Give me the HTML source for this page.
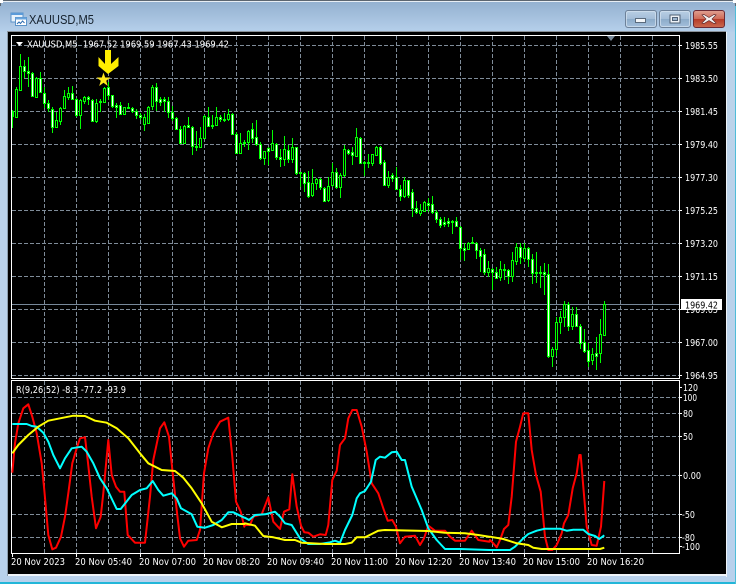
<!DOCTYPE html>
<html>
<head>
<meta charset="utf-8">
<style>
html,body{margin:0;padding:0;background:#b8d0ea}
body{width:736px;height:584px;overflow:hidden;position:relative;font-family:"Liberation Sans",sans-serif}
svg{position:absolute;left:0;top:0}
text{font-family:"DejaVu Sans","Liberation Sans",sans-serif}
text.t{font-family:"Liberation Sans",sans-serif}
</style>
</head>
<body>
<svg id="s" width="736" height="584" viewBox="0 0 736 584" xmlns="http://www.w3.org/2000/svg">
<defs>
<linearGradient id="tb" x1="0" y1="0" x2="0" y2="1"><stop offset="0" stop-color="#94b1d0"/><stop offset="1" stop-color="#b6d0eb"/></linearGradient>
<linearGradient id="lf" x1="0" y1="0" x2="0" y2="1"><stop offset="0" stop-color="#b6d0eb"/><stop offset="0.1" stop-color="#bcd3ea"/><stop offset="1" stop-color="#b8d1ec"/></linearGradient>
<linearGradient id="b1" x1="0" y1="0" x2="0" y2="1"><stop offset="0" stop-color="#b9cfe4"/><stop offset="0.5" stop-color="#a3bdd8"/><stop offset="0.5" stop-color="#8cabc9"/><stop offset="1" stop-color="#a5c0dc"/></linearGradient>
<linearGradient id="b2" x1="0" y1="0" x2="0" y2="1"><stop offset="0" stop-color="#e0a092"/><stop offset="0.5" stop-color="#cf6a56"/><stop offset="0.5" stop-color="#b53a28"/><stop offset="1" stop-color="#cb6a50"/></linearGradient>
</defs>
<!-- window -->
<rect x="0" y="0" width="736" height="584" fill="url(#lf)"/>
<path d="M0 584V5Q0 1 5 1H730Q735 1 735 6V584Z" fill="url(#lf)"/>
<rect x="0" y="2" width="736" height="30" fill="url(#tb)"/>
<path d="M0 6V4Q0 0 4 0H731Q736 0 736 5V7H735V5Q735 1 731 1H4Q1 1 1 4V6Z" fill="#5c6670"/>
<rect x="3" y="1" width="730" height="1" fill="#e8eef4"/>
<rect x="0" y="0" width="3" height="3" fill="#fff"/><rect x="733" y="0" width="3" height="3" fill="#fff"/>
<rect x="0" y="582" width="736" height="2" fill="#22b6d8"/>
<rect x="735" y="6" width="1" height="578" fill="#4fbcd8"/>
<rect x="7" y="31" width="719" height="1" fill="#8b9299"/>
<rect x="7" y="32" width="1" height="544" fill="#8b9dae"/>
<!-- icon -->
<rect x="11" y="13" width="12" height="9" fill="#e8f2fb" stroke="#5a92c8"/>
<rect x="11" y="13" width="12" height="2" fill="#5a9ad8"/>
<rect x="15.500" y="17.500" width="11" height="8" fill="#fff" stroke="#5a92c8"/>
<rect x="15.500" y="17.500" width="11" height="2" fill="#6aa6de"/>
<path d="M17 24l2-2 1.500 1.500 2-2.500 2 2" fill="none" stroke="#2a6ab0"/>
<text class="t" x="29" y="24" font-size="12.500" fill="#16222e" textLength="65" lengthAdjust="spacingAndGlyphs">XAUUSD,M5</text>
<!-- buttons -->
<rect x="625.500" y="10.500" width="31" height="17" rx="2.500" fill="url(#b1)" stroke="#6d8199"/>
<rect x="626.500" y="11.500" width="29" height="15" rx="2" fill="none" stroke="#d6e3ef" stroke-opacity=".7"/>
<rect x="635.500" y="18.500" width="10" height="4" fill="#f2f5f8" stroke="#5a6a7c"/>
<rect x="659.500" y="10.500" width="31" height="17" rx="2.500" fill="url(#b1)" stroke="#6d8199"/>
<rect x="660.500" y="11.500" width="29" height="15" rx="2" fill="none" stroke="#d6e3ef" stroke-opacity=".7"/>
<rect x="670" y="15" width="10" height="8" fill="#eef2f6" stroke="#4f6074" stroke-width="1"/>
<rect x="672.500" y="17.500" width="5" height="3" fill="#9db6cf" stroke="#4f6074"/>
<rect x="693.500" y="10.500" width="31" height="17" rx="2.500" fill="url(#b2)" stroke="#6c2a34"/>
<path d="M704 14.500l5 3 5-3 2 .5-4 4 4 4-2 .5-5-3-5 3-2-.5 4-4-4-4z" fill="#f4f2f2" stroke="#5c2c30" stroke-width=".7"/>
<!-- chart bg -->
<rect x="8" y="32" width="718" height="543" fill="#000"/>
<rect x="726" y="32" width="1" height="545" fill="#eef3f8"/>
<rect x="8" y="574" width="719" height="2" fill="#eef3f8"/>
<rect x="11" y="35" width="669" height="1" fill="#fff"/>
<rect x="11" y="35" width="1" height="344" fill="#fff"/>
<rect x="679" y="35" width="1" height="344" fill="#fff"/>
<rect x="11" y="378" width="669" height="1" fill="#fff"/>
<rect x="11" y="380" width="669" height="1" fill="#fff"/>
<rect x="11" y="380" width="1" height="174" fill="#fff"/>
<rect x="679" y="380" width="1" height="174" fill="#fff"/>
<rect x="11" y="553" width="669" height="1" fill="#fff"/>
<g id="grid" stroke="#7f8c99" stroke-width="1" stroke-dasharray="4 2" shape-rendering="crispEdges" fill="none"></g>
<rect x="12" y="304" width="667" height="1" fill="#778899"/>
<g id="cand" shape-rendering="crispEdges"></g>
<polygon points="607,36 615,36 611,41" fill="#778899"/>
<polygon points="16,42 23,42 19.500,46" fill="#fff"/>
<text x="27" y="47.500" font-size="9.500" fill="#fff" textLength="202" lengthAdjust="spacingAndGlyphs" xml:space="preserve">XAUUSD,M5  1967.52 1969.59 1967.43 1969.42</text>
<!-- arrow and star -->
<polygon points="105,50 111,50 111,64 118.500,57 118.500,66 108,74 98.500,66 98.500,57 105,64" fill="#ffee00"/>
<polygon points="103.500,72.500 105.200,77.500 110.500,77.500 106.200,80.700 107.800,86 103.500,82.800 99.200,86 100.800,80.700 96.500,77.500 101.800,77.500" fill="#ffe81a"/>
<g id="ind" fill="none" stroke-width="2" stroke-linejoin="round"></g>
<text x="16" y="393" font-size="9.500" fill="#fff" textLength="110" lengthAdjust="spacingAndGlyphs">R(9,26,52) -8.3 -77.2 -93.9</text>
<!-- price axis -->
<g fill="#fff" font-size="9.500">
<text x="685" y="49" textLength="33" lengthAdjust="spacingAndGlyphs">1985.55</text>
<text x="685" y="82" textLength="33" lengthAdjust="spacingAndGlyphs">1983.50</text>
<text x="685" y="115" textLength="33" lengthAdjust="spacingAndGlyphs">1981.45</text>
<text x="685" y="148" textLength="33" lengthAdjust="spacingAndGlyphs">1979.40</text>
<text x="685" y="181" textLength="33" lengthAdjust="spacingAndGlyphs">1977.30</text>
<text x="685" y="214" textLength="33" lengthAdjust="spacingAndGlyphs">1975.25</text>
<text x="685" y="247" textLength="33" lengthAdjust="spacingAndGlyphs">1973.20</text>
<text x="685" y="280" textLength="33" lengthAdjust="spacingAndGlyphs">1971.15</text>
<text x="685" y="313" textLength="33" lengthAdjust="spacingAndGlyphs">1969.05</text>
<text x="685" y="346" textLength="33" lengthAdjust="spacingAndGlyphs">1967.00</text>
<text x="685" y="379" textLength="33" lengthAdjust="spacingAndGlyphs">1964.95</text>
</g>
<rect x="681" y="299" width="41" height="11" fill="#fff"/>
<text x="685" y="308.500" font-size="9.500" fill="#000" textLength="33" lengthAdjust="spacingAndGlyphs">1969.42</text>
<g fill="#fff" font-size="9.500">
<text x="683" y="391" textLength="15" lengthAdjust="spacingAndGlyphs">120</text>
<text x="683" y="401" textLength="14" lengthAdjust="spacingAndGlyphs">100</text>
<text x="683" y="417" textLength="10" lengthAdjust="spacingAndGlyphs">80</text>
<text x="683" y="440" textLength="10" lengthAdjust="spacingAndGlyphs">50</text>
<text x="683" y="479" textLength="18" lengthAdjust="spacingAndGlyphs">0.00</text>
<text x="682" y="518" textLength="13" lengthAdjust="spacingAndGlyphs">-50</text>
<text x="682" y="541" textLength="13" lengthAdjust="spacingAndGlyphs">-80</text>
<text x="682" y="550" textLength="18" lengthAdjust="spacingAndGlyphs">-100</text>
</g>
<!-- time axis -->
<g fill="#fff" font-size="9.500">
<text x="11" y="565" textLength="54" lengthAdjust="spacingAndGlyphs">20 Nov 2023</text>
<text x="75" y="565" textLength="57" lengthAdjust="spacingAndGlyphs">20 Nov 05:40</text>
<text x="139" y="565" textLength="57" lengthAdjust="spacingAndGlyphs">20 Nov 07:00</text>
<text x="203" y="565" textLength="57" lengthAdjust="spacingAndGlyphs">20 Nov 08:20</text>
<text x="267" y="565" textLength="57" lengthAdjust="spacingAndGlyphs">20 Nov 09:40</text>
<text x="331" y="565" textLength="57" lengthAdjust="spacingAndGlyphs">20 Nov 11:00</text>
<text x="395" y="565" textLength="57" lengthAdjust="spacingAndGlyphs">20 Nov 12:20</text>
<text x="459" y="565" textLength="57" lengthAdjust="spacingAndGlyphs">20 Nov 13:40</text>
<text x="523" y="565" textLength="57" lengthAdjust="spacingAndGlyphs">20 Nov 15:00</text>
<text x="587" y="565" textLength="57" lengthAdjust="spacingAndGlyphs">20 Nov 16:20</text>
</g>
</svg>
<script>
var NS="http://www.w3.org/2000/svg";
function el(p,n,a){var e=document.createElementNS(NS,n);for(var k in a)e.setAttribute(k,a[k]);p.appendChild(e);return e;}
var g=document.getElementById('grid'),i,j;
[45,78,111,144,177,210,243,276,309,342,375,397,413,436,475,514,537].forEach(function(y){el(g,'line',{x1:12,x2:679,y1:y+.5,y2:y+.5});});
for(i=44;i<=652;i+=32){el(g,'line',{x1:i+.5,x2:i+.5,y1:36,y2:378});el(g,'line',{x1:i+.5,x2:i+.5,y1:381,y2:553});}
var t=document.getElementById('s');
[45,78,111,144,177,210,243,276,309,342,375,397,413,436,475,514,537,387,546].forEach(function(y){el(t,'rect',{x:680,y:y,width:2,height:1,fill:'#fff'});});
for(i=12;i<=588;i+=64){el(t,'rect',{x:i,y:554,width:1,height:3,fill:'#fff'});}
var D="330,332,348,385,w 262,268,350,350,b 162,198,270,272,b 180,198,212,235,w 170,212,220,262,w 215,220,287,290,w 230,235,290,295,b 215,235,275,280,w 262,278,310,325,w 300,310,325,335,w 320,328,380,400,w 335,360,380,380,b 320,323,362,375,b 270,287,325,328,b 262,280,290,300,b 258,280,297,300,w 295,298,345,350,w 298,300,345,387,b 288,292,304,312,b 288,292,296,315,w 298,300,362,362,w 298,310,362,368,b 297,302,304,335,w 262,264,305,306,b 245,262,286,300,w 285,286,318,325,w 310,314,320,355,w 305,315,342,345,w 320,322,342,342,b 308,320,323,325,w 320,325,332,340,w 328,332,346,358,w 340,344,352,360,w 342,352,372,392,b 318,320,368,372,b 255,260,318,330,b 248,260,302,332,w 290,298,305,318,w 290,297,303,335,w 290,302,335,355,w 318,335,355,362,w 352,354,388,390,w 378,388,430,432,w 375,378,430,432,b 350,376,380,382,w 378,380,438,466,w 392,438,441,452,b 380,414,440,442,b 345,348,415,418,b 322,350,378,380,w 345,375,378,388,w 322,350,375,378,b 345,350,358,365,w 340,356,359,365,w 328,343,358,362,b 340,343,402,402,w 395,402,458,458,w 400,430,458,460,b 420,426,430,440,w 390,392,425,450,b 370,388,413,430,w 360,412,433,438,w 425,433,473,480,w 473,452,473,495,b 440,445,452,495,w 390,430,450,452,b 430,433,470,480,w 448,470,476,500,w 408,448,476,498,b 435,450,477,490,w 415,442,478,490,b 440,442,520,525,w 515,516,520,560,w 515,518,548,575,w 513,545,588,593,w 507,548,585,590,b 535,538,548,570,b 535,538,562,570,w 560,563,603,607,w 530,557,601,605,b 488,515,556,560,b 505,517,560,568,w 520,526,560,593,b 435,448,526,530,b 448,450,458,465,w 440,456,465,495,w 385,412,468,472,b 412,415,488,490,w 484,486,490,528,w 462,486,490,503,w 462,463,488,498,b 438,442,465,468,b 438,442,490,495,w 480,487,554,556,w 512,530,556,563,b 518,526,533,545,w 502,532,568,570,w 555,568,588,603,w 530,540,587,593,b 540,541,585,593,w 568,576,623,650,w 603,623,635,642,w 613,631,638,647,b 603,607,632,635,b 593,610,614,635,w 588,613,637,643,w 630,637,658,670,w 650,658,675,683,w 650,667,672,680,w 653,664,668,680,w 660,663,665,702,w 650,664,679,680,w 679,680,745,780,w 730,745,749,782,w 725,728,748,750,b 712,727,730,732,w 727,728,751,776,w 745,751,767,815,w 748,763,815,825,w 783,805,815,830,b 805,808,817,870,w 800,817,833,837,w 783,808,830,843,b 793,808,811,841,w 807,811,828,852,w 755,780,828,847,b 730,742,782,795,b 730,742,772,792,w 730,745,773,785,b 740,745,778,802,w 763,778,818,852,w 755,815,818,850,b 797,815,818,863,w 790,817,821,885,w 792,821,1067,1075,w 1040,1048,1067,1100,b 952,967,1048,1067,b 933,952,965,1003,b 902,913,952,980,b 907,911,977,992,w 920,943,977,990,b 920,943,977,980,w 973,977,1030,1048,w 988,1027,1053,1060,w 1030,1051,1082,1100,w 1043,1063,1080,1095,b 1010,1060,1067,1110,w 957,1003,1060,1090,b 903,913,1005,1008,b".split(' ');
var c=document.getElementById('cand');
D.forEach(function(s,n){
 var p=s.split(','),x=12+4*n;
 var a=Math.round(p[0]/3),b=Math.round(p[1]/3),d=Math.round(p[2]/3),e=Math.round(p[3]/3);
 if(d<b+1)d=b+1;
 el(c,'rect',{x:x,y:a,width:1,height:Math.max(e-a,1),fill:'#00ff00'});
 if(n==0){el(c,'rect',{x:12,y:b,width:2,height:d-b+1,fill:'#00ff00'});return;}
 el(c,'rect',{x:x-1,y:b,width:3,height:d-b+1,fill:'#00ff00'});
 if(d-b>=2)el(c,'rect',{x:x,y:b+1,width:1,height:d-b-1,fill:p[4]=='w'?'#ffffff':'#000000'});
});
function pts(z6,z7,z8){var o=[];
 function add(a,ox){for(var k=0;k<a.length;k+=2)o.push((ox+a[k]/3).toFixed(1)+','+(380+a[k+1]/3).toFixed(1));}
 add(z6,0);add(z7,245);add(z8,490);return o.join(' ');}
var ig=document.getElementById('ind');
el(ig,'polyline',{stroke:'#ff0000',points:pts(
[37,278,45,190,55,130,70,85,85,73,97,110,110,160,125,250,133,330,145,465,157,508,168,503,183,470,195,410,205,340,217,250,230,205,240,175,255,172,263,240,275,350,288,445,302,410,310,340,325,180,335,285,348,320,360,335,373,335,383,465,405,488,435,488,450,350,460,240,480,145,493,127,507,170,518,280,530,390,540,475,552,500,565,482,590,480,600,450,612,280,625,205,640,160,660,125,685,113,697,230,708,365,722,395,733,440],
[0,435,15,435,25,410,50,403,70,352,85,425,105,447,117,395,133,388,142,283,155,380,168,437,178,457,190,458,205,470,225,463,242,465,250,435,262,300,275,272,285,195,300,175,310,115,322,90,335,90,350,140,365,215,380,310,400,340,415,385,428,422,442,420,453,440,465,490,480,470,510,467,525,495,537,475,550,437,570,452,600,452,615,470,630,482,660,482,680,452,700,480,733,485],
[0,480,10,490,20,502,30,480,42,447,55,435,65,350,78,185,90,140,100,100,115,100,125,210,138,285,152,335,165,470,175,510,187,510,200,495,215,460,222,430,235,405,248,325,260,280,268,225,272,225,280,320,290,440,305,495,320,497,333,440,343,303])});
el(ig,'polyline',{stroke:'#00ffff',points:pts(
[37,132,80,132,95,138,110,140,130,158,145,185,160,225,180,265,195,235,215,205,245,200,260,215,280,250,300,295,320,325,350,387,362,387,395,345,420,330,440,325,458,303,475,330,490,347,515,340,530,355,543,385,575,403,592,440,615,443,640,435,665,420,685,397,700,397,733,413],
[0,413,12,420,30,405,60,403,90,395,105,410,120,430,140,435,165,475,190,492,225,492,255,487,270,482,285,488,300,450,322,405,335,355,345,340,360,333,378,305,392,240,405,230,420,233,440,217,455,215,470,240,480,240,500,320,530,390,550,445,575,480,600,507,645,507,733,510],
[0,510,60,510,75,500,100,475,115,462,140,452,165,446,210,446,230,452,250,449,280,449,295,462,315,468,328,477,343,466])});
el(ig,'polyline',{stroke:'#ffff00',points:pts(
[37,220,55,195,85,165,115,140,145,122,190,113,220,107,255,108,285,122,320,128,350,145,385,175,420,220,445,250,485,270,525,273,550,293,575,325,605,370,635,425,665,442,695,432,733,432],
[0,430,30,437,55,468,85,472,120,480,150,480,170,488,240,492,300,492,320,488,335,472,360,472,380,462,400,452,420,450,550,453,600,458,660,460,700,465,733,470],
[0,470,40,477,80,490,115,495,130,503,155,507,330,507,343,503])});
</script>
</body>
</html>
